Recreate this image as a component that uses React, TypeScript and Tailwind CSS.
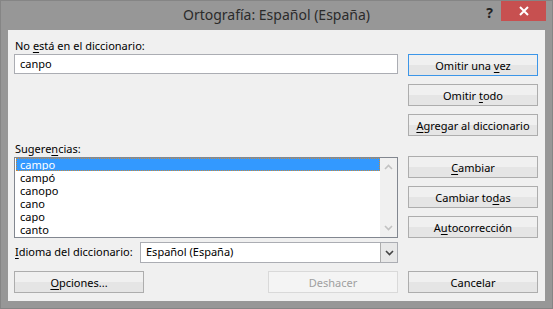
import { ReactNode } from "react";

const font = "font-['Noto_Sans',sans-serif]";

interface BtnProps {
    children: ReactNode,
    focused?: boolean,
    disabled?: boolean
}

const Btn = ({ children, focused, disabled }: BtnProps) => {
    let look = "border-[#adadad] bg-[linear-gradient(to_bottom,#f0f0f0_50%,#e5e5e5_50%)] text-black";
    if (focused) look = "border-[#3c96e8] bg-[linear-gradient(to_bottom,#f0f0f0_50%,#e5e5e5_50%)] text-black";
    if (disabled) look = "border-[#d9d9d9] bg-[#f4f4f4] text-[#a0a0a0]";
    return (
        <button className={`h-[22px] w-[130px] shrink-0 whitespace-nowrap border text-[11px] leading-none ${look}`}>
            {children}
        </button>
    );
}

const Chevron = ({ up, color }: { up?: boolean, color: string }) => (
    <svg width="9" height="6" viewBox="0 0 9 6">
        <path d={up ? "M1 5 L4.5 1.5 L8 5" : "M1 1 L4.5 4.5 L8 1"} fill="none" stroke={color} strokeWidth="1.6" />
    </svg>
);

const suggestions = ["campo", "campó", "canopo", "cano", "capo", "canto"];

export default function App() {
    return (
        <div className={`${font} flex h-[309px] w-[553px] flex-col border border-[#858585] bg-[#979797]`}>
            {/* title bar */}
            <div className="grid h-[29px] shrink-0 grid-cols-[1fr_auto_1fr]">
                <div></div>
                <div className="whitespace-nowrap pt-[4px] text-[14px] leading-[20px] text-[#2b2b2b]">Ortografía: Español (España)</div>
                <div className="flex justify-end">
                    <span className="mr-[8px] pt-[2px] text-[14px] font-bold leading-[20px] text-[#222]">?</span>
                    <div className="mr-[6px] flex h-[20px] w-[45px] items-center justify-center bg-[#c75050]">
                        <svg width="10" height="10" viewBox="0 0 10 10">
                            <path d="M1 1 L9 9 M9 1 L1 9" stroke="white" strokeWidth="2" />
                        </svg>
                    </div>
                </div>
            </div>

            {/* client area */}
            <div className="mx-[7px] mb-[7px] flex flex-1 gap-[10px] bg-[#f0f0f0] pl-[6px] pr-[7px] text-[11px] text-black">
                <div className="flex w-[384px] flex-col pt-[8px]">
                    <div className="h-[16px] whitespace-nowrap pl-[1px] leading-[16px]">No <u className="underline-offset-2">e</u>stá en el diccionario:</div>
                    <div className="flex h-[20px] items-center border border-[#abadb3] bg-white pl-[5px]">canpo</div>

                    <div className="mt-[67px] h-[16px] whitespace-nowrap pl-[1px] leading-[16px]">Sugere<u className="underline-offset-2">n</u>cias:</div>
                    <div className="flex h-[81px] border border-[#828790] bg-white">
                        <div className="flex flex-1 flex-col pl-[1px]">
                            {suggestions.map((s, i) => (
                                <div key={s} className={i === 0
                                    ? "h-[13px] overflow-hidden border border-dotted border-[#c98a3a] bg-[#3399ff] pl-[3px] leading-[11px] text-white"
                                    : "h-[13px] overflow-hidden pl-[4px] leading-[13px]"}>{s}</div>
                            ))}
                        </div>
                        <div className="flex w-[17px] flex-col items-center justify-between bg-[#f0f0f0] py-[6px]">
                            <Chevron up color="#c2c2c2" />
                            <Chevron color="#c2c2c2" />
                        </div>
                    </div>

                    <div className="mt-[4px] flex h-[21px] items-center">
                        <div className="w-[126px] whitespace-nowrap pl-[1px]"><u className="underline-offset-2">I</u>dioma del diccionario:</div>
                        <div className="flex h-[21px] flex-1 border border-[#abadb3] bg-white">
                            <div className="flex flex-1 items-center pl-[5px]">Español (España)</div>
                            <div className="flex w-[17px] items-center justify-center border-l border-[#acacac] bg-[#e8e8e8]">
                                <Chevron color="#444" />
                            </div>
                        </div>
                    </div>

                    <div className="mt-[8px] flex justify-between">
                        <Btn><u className="underline-offset-2">O</u>pciones...</Btn>
                        <Btn disabled>Deshacer</Btn>
                    </div>
                </div>

                <div className="flex w-[130px] flex-col pt-[24px]">
                    <div className="flex flex-col gap-[8px]">
                        <Btn focused>Omitir una <u className="underline-offset-2">v</u>ez</Btn>
                        <Btn>Omitir <u className="underline-offset-2">t</u>odo</Btn>
                        <Btn><u className="underline-offset-2">A</u>gregar al diccionario</Btn>
                    </div>
                    <div className="mt-[20px] flex flex-col gap-[8px]">
                        <Btn><u className="underline-offset-2">C</u>ambiar</Btn>
                        <Btn>Cambiar to<u className="underline-offset-2">d</u>as</Btn>
                        <Btn>A<u className="underline-offset-2">u</u>tocorrección</Btn>
                    </div>
                    <div className="mt-[33px]">
                        <Btn>Cancelar</Btn>
                    </div>
                </div>
            </div>
        </div>
    );
}
